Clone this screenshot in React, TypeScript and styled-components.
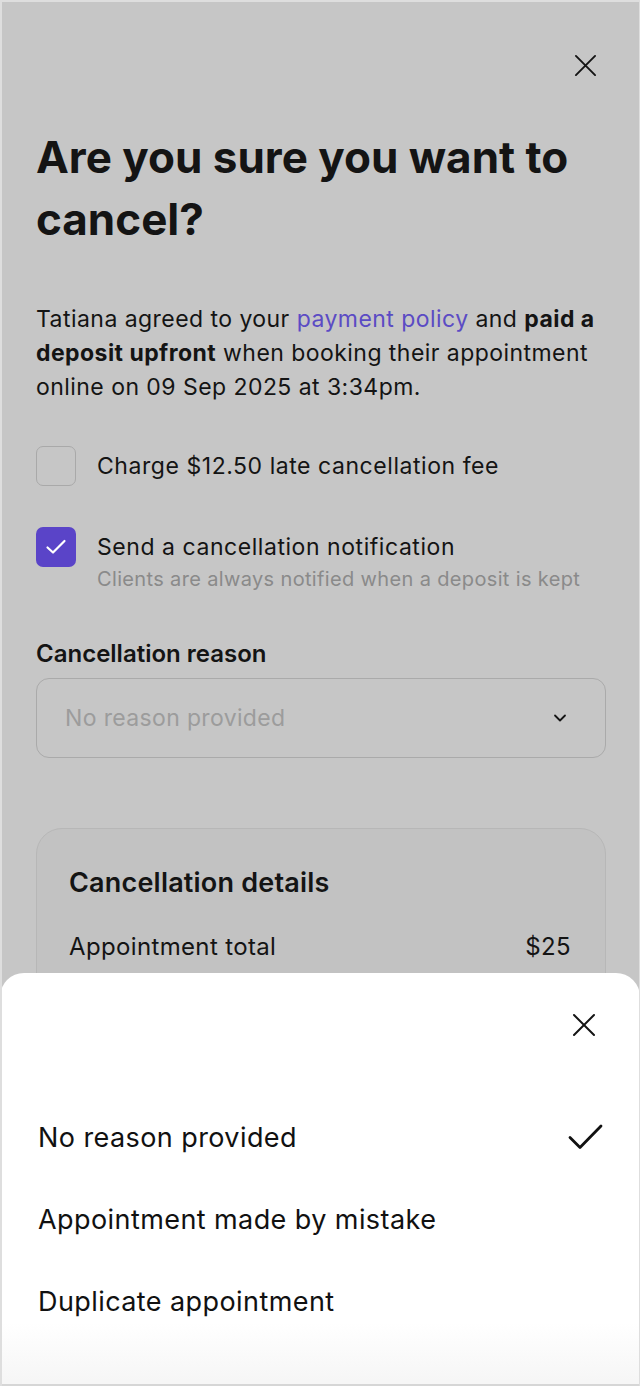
import React from "react";
import styled, { createGlobalStyle } from "styled-components";

const GlobalStyle = createGlobalStyle`
  html, body {
    margin: 0;
    padding: 0;
    background: #c6c6c6;
  }
  * {
    box-sizing: border-box;
  }
`;

const Tela = styled.div`
  position: relative;
  width: 640px;
  height: 1386px;
  overflow: hidden;
  background: #c6c6c6;
  border-top: 2px solid #dedede;
  border-left: 2px solid #dedede;
  border-right: 1px solid #dedede;
  font-family: Inter, "Noto Sans", sans-serif;
  color: #141414;
`;

const Conteudo = styled.div`
  display: flex;
  flex-direction: column;
  padding: 0 33px 0 34px;
`;

const BarraTopo = styled.div`
  display: flex;
  justify-content: flex-end;
  padding: 49px 7px 0 0;
  height: 124px;
`;

const BotaoFechar = styled.button`
  display: flex;
  align-items: center;
  justify-content: center;
  width: 28px;
  height: 28px;
  padding: 0;
  border: none;
  background: transparent;
  color: #141414;
`;

const Titulo = styled.h1`
  margin: 0;
  font-size: 44px;
  line-height: 62px;
  font-weight: 700;
  letter-spacing: 0;
`;

const Paragrafo = styled.p`
  margin: 52px 0 0;
  font-size: 23px;
  line-height: 34px;
  font-weight: 400;
  letter-spacing: 0.45px;

  strong {
    font-weight: 700;
  }
`;

const Link = styled.span`
  color: #5b4bc4;
`;

const LinhaOpcao = styled.label<{ $topo: number }>`
  display: flex;
  align-items: flex-start;
  gap: 21px;
  margin-top: ${(p) => p.$topo}px;
`;

const Caixa = styled.span<{ $marcada?: boolean }>`
  flex: none;
  display: flex;
  align-items: center;
  justify-content: center;
  width: 40px;
  height: 40px;
  border-radius: 7px;
  border: ${(p) => (p.$marcada ? "none" : "1.5px solid #a9a9a9")};
  background: ${(p) => (p.$marcada ? "#5a44c8" : "transparent")};
  color: #ffffff;
`;

const TextoOpcao = styled.span`
  display: flex;
  flex-direction: column;
`;

const Rotulo = styled.span`
  font-size: 23px;
  line-height: 40px;
  letter-spacing: 0.55px;
`;

const Ajuda = styled.span`
  font-size: 20px;
  line-height: 24px;
  color: #8a8a8a;
  letter-spacing: 0.35px;
`;

const TituloSecao = styled.div`
  margin-top: 48px;
  font-size: 24px;
  line-height: 30px;
  font-weight: 600;
  letter-spacing: 0;
`;

const Seletor = styled.div`
  display: flex;
  align-items: center;
  justify-content: space-between;
  margin-top: 9px;
  height: 80px;
  padding: 0 38px 0 28px;
  border: 1.5px solid #aaaaaa;
  border-radius: 13px;
`;

const Placeholder = styled.span`
  font-size: 23px;
  color: #9c9c9c;
  letter-spacing: 0.35px;
`;

const Cartao = styled.div`
  margin-top: 70px;
  padding: 37px 34px 40px 32px;
  border: 1.5px solid #b7b7b7;
  border-radius: 26px;
  background: #c2c2c2;
`;

const TituloCartao = styled.div`
  font-size: 27px;
  line-height: 34px;
  font-weight: 600;
  letter-spacing: 0.2px;
`;

const LinhaValor = styled.div`
  display: flex;
  justify-content: space-between;
  margin-top: 30px;
  font-size: 24px;
  line-height: 34px;
  letter-spacing: 0.35px;

  & + & {
    margin-top: 16px;
  }
`;

const Folha = styled.div`
  position: absolute;
  left: -2px;
  right: -1px;
  bottom: 0;
  height: 413px;
  display: flex;
  flex-direction: column;
  padding: 28px 37px 0 38px;
  background: linear-gradient(to bottom, #ffffff 0, #ffffff 350px, #f6f6f6 408px);
  border-radius: 24px 24px 0 0;
  border-bottom: 2px solid #d6d6d6;
`;

const CabecalhoFolha = styled.div`
  display: flex;
  justify-content: flex-end;
  align-items: center;
  height: 48px;
  padding-right: 5px;
`;

const ListaMotivos = styled.div`
  display: flex;
  flex-direction: column;
  margin-top: 47px;
`;

const Motivo = styled.div`
  display: flex;
  align-items: center;
  justify-content: space-between;
  height: 82px;
  font-size: 27px;
  letter-spacing: 0.42px;
  color: #111111;
`;

const IconeX = ({ tamanho }: { tamanho: number }) => (
  <svg width={tamanho} height={tamanho} viewBox="0 0 24 24" fill="none">
    <path d="M2 2L22 22M22 2L2 22" stroke="currentColor" strokeWidth="2" strokeLinecap="round" />
  </svg>
);

const motivos = [
  { texto: "No reason provided", selecionado: true },
  { texto: "Appointment made by mistake", selecionado: false },
  { texto: "Duplicate appointment", selecionado: false },
];

const App = () => {
  return (
    <>
      <GlobalStyle />
      <Tela>
        <Conteudo>
          <BarraTopo>
            <BotaoFechar aria-label="Fechar">
              <IconeX tamanho={23} />
            </BotaoFechar>
          </BarraTopo>
          <Titulo>Are you sure you want to cancel?</Titulo>
          <Paragrafo>
            Tatiana agreed to your <Link>payment policy</Link> and{" "}
            <strong>paid a deposit upfront</strong> when booking their appointment online on 09
            Sep 2025 at 3:34pm.
          </Paragrafo>

          <LinhaOpcao $topo={42}>
            <Caixa />
            <TextoOpcao>
              <Rotulo>Charge $12.50 late cancellation fee</Rotulo>
            </TextoOpcao>
          </LinhaOpcao>

          <LinhaOpcao $topo={41}>
            <Caixa $marcada>
              <svg width="24" height="24" viewBox="0 0 24 24" fill="none">
                <path
                  d="M3.5 12.5L9 17.5L20.5 6"
                  stroke="currentColor"
                  strokeWidth="2.2"
                  strokeLinecap="round"
                  strokeLinejoin="round"
                />
              </svg>
            </Caixa>
            <TextoOpcao>
              <Rotulo>Send a cancellation notification</Rotulo>
              <Ajuda>Clients are always notified when a deposit is kept</Ajuda>
            </TextoOpcao>
          </LinhaOpcao>

          <TituloSecao>Cancellation reason</TituloSecao>
          <Seletor>
            <Placeholder>No reason provided</Placeholder>
            <svg width="14" height="10" viewBox="0 0 14 10" fill="none">
              <path
                d="M2 2.5L7 7.5L12 2.5"
                stroke="#141414"
                strokeWidth="1.8"
                strokeLinecap="round"
                strokeLinejoin="round"
              />
            </svg>
          </Seletor>

          <Cartao>
            <TituloCartao>Cancellation details</TituloCartao>
            <LinhaValor>
              <span>Appointment total</span>
              <span>$25</span>
            </LinhaValor>
            <LinhaValor>
              <span>Deposit paid</span>
              <span>$12.50</span>
            </LinhaValor>
          </Cartao>
        </Conteudo>

        <Folha>
          <CabecalhoFolha>
            <BotaoFechar aria-label="Fechar">
              <IconeX tamanho={24} />
            </BotaoFechar>
          </CabecalhoFolha>
          <ListaMotivos>
            {motivos.map((m) => (
              <Motivo key={m.texto}>
                <span>{m.texto}</span>
                {m.selecionado && (
                  <svg width="35" height="26" viewBox="0 0 35 26" fill="none">
                    <path
                      d="M2 13.5L12 23.5L33 2"
                      stroke="#111111"
                      strokeWidth="2.8"
                      strokeLinecap="round"
                      strokeLinejoin="round"
                    />
                  </svg>
                )}
              </Motivo>
            ))}
          </ListaMotivos>
        </Folha>
      </Tela>
    </>
  );
};

export default App;
